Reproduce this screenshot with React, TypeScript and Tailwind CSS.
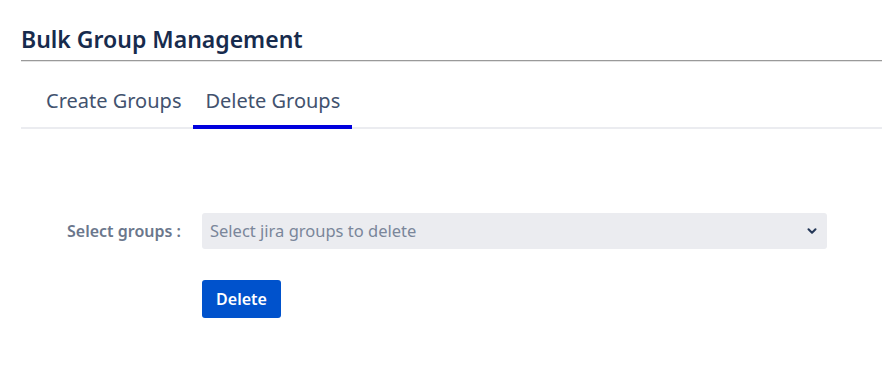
import React from 'react';
import { ChevronDown } from 'lucide-react';

export default function App() {
  return (
    <div className="min-h-[385px] bg-white pl-[21px] pt-[24px]" style={{ fontFamily: '"Noto Sans", "Open Sans", sans-serif' }}>
      <h1 className="text-[23px] font-semibold leading-[30px] text-[#172b4d]">Bulk Group Management</h1>
      <div className="mt-[6px] h-[1px] bg-[#9a9a9a]" />
      <div className="h-[1px] bg-[#e4e4e4]" />

      {/* Tabs */}
      <div className="mt-[26px] flex border-b-2 border-[#ebecf0] pl-[13px]">
        <button className="px-[12px] pb-[13px] text-[20px] leading-[26px] text-[#42526e]">Create Groups</button>
        <button className="relative px-[12px] pb-[13px] text-[20px] leading-[26px] text-[#42526e]">
          Delete Groups
          <span className="absolute -bottom-[2px] left-0 right-0 h-[4px] bg-[#0000dd]" />
        </button>
      </div>

      {/* Form */}
      <div className="mt-[84px] flex items-center">
        <label className="w-[181px] pl-[46px] text-[16px] font-semibold text-[#6b778c]">Select groups :</label>
        <div className="flex h-[36px] w-[625px] items-center justify-between rounded-[3px] bg-[#ebecf0] pl-[8px] pr-[8px]">
          <span className="text-[16.5px] text-[#7a869a]">Select jira groups to delete</span>
          <ChevronDown className="h-[14px] w-[14px] text-[#253858]" strokeWidth={3.5} />
        </div>
      </div>
      <div className="mt-[31px] pl-[181px]">
        <button className="h-[38px] w-[79px] rounded-[3px] bg-[#0052cc] text-[16px] font-semibold text-white">Delete</button>
      </div>
    </div>
  );
}
